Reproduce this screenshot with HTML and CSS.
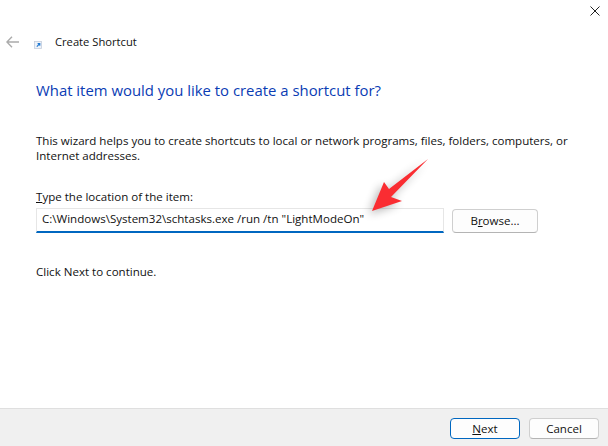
FILE: index.html
```html
<!DOCTYPE html>
<html lang="en">
<head>
<meta charset="utf-8">
<title>Create Shortcut</title>
<link rel="stylesheet" href="styles.css">
</head>
<body>
<div class="window">
  <div class="closebar">
    <svg class="close" width="10" height="10" viewBox="0 0 10 10" aria-hidden="true"><path d="M.5.5l9 9M9.5.5l-9 9" stroke="#222" stroke-width="1" fill="none"/></svg>
  </div>
  <header class="titlebar">
    <svg class="back" width="13" height="12" viewBox="0 0 13 12" aria-hidden="true"><path d="M6 .7L.9 6 6 11.3M1 6h12" stroke="#ababab" stroke-width="1.4" fill="none"/></svg>
    <svg class="appicon" width="8" height="8" viewBox="0 0 8 8" aria-hidden="true"><rect x=".5" y=".5" width="7" height="7" fill="#eef2f8" stroke="#c4cedc" stroke-width=".8"/><path d="M2.8 5.6L5.6 2.8M3.6 2.6h2.2v2.2" stroke="#1f78d1" stroke-width="1.1" fill="none"/></svg>
    <span class="title">Create Shortcut</span>
  </header>
  <main class="content">
    <h1 class="heading">What item would you like to create a shortcut for?</h1>
    <p class="intro">This wizard helps you to create shortcuts to local or network programs, files, folders, computers, or Internet addresses.</p>
    <label class="label" for="loc"><u>T</u>ype the location of the item:</label>
    <div class="field-row">
      <div class="field" id="loc">C:\Windows\System32\schtasks.exe /run /tn "LightModeOn"</div>
      <button class="btn browse" type="button">B<u>r</u>owse...</button>
    </div>
    <p class="hint">Click Next to continue.</p>
  </main>
  <footer class="footer">
    <button class="btn primary" type="button"><u>N</u>ext</button>
    <button class="btn" type="button">Cancel</button>
  </footer>
  <svg class="annotation" width="80" height="70" viewBox="360 150 80 70" aria-hidden="true">
    <defs><filter id="shadow" x="-50%" y="-50%" width="200%" height="200%"><feGaussianBlur stdDeviation="5"/></filter></defs>
    <path d="M428 159L389 189 384 182 372 211 402 201 391 197Z" fill="#000" opacity=".3" filter="url(#shadow)" transform="translate(-3 3)"/>
    <path d="M428 159L389 189 384 182 372 211 402 201 391 197Z" fill="#fa2d32"/>
  </svg>
</div>
</body>
</html>
```
FILE: styles.css
```css
* { box-sizing: border-box; }
html, body { margin: 0; padding: 0; }
body {
  width: 608px;
  height: 446px;
  overflow: hidden;
  background: #fff;
  font-family: "Open Sans", "Noto Sans", "Liberation Sans", sans-serif;
  font-size: 11.55px;
  color: #111;
}
.window {
  position: relative;
  width: 608px;
  height: 446px;
  display: flex;
  flex-direction: column;
}
.closebar {
  height: 31px;
  padding: 6px 8px 0 0;
  display: flex;
  justify-content: flex-end;
}
.titlebar {
  height: 21px;
  display: flex;
  align-items: center;
  padding-left: 6px;
}
.back { flex: none; }
.appicon { flex: none; margin: 6px 0 0 15px; }
.title { margin-left: 13px; font-size: 11.2px; color: #111; }
.content {
  flex: 1;
  padding: 0 0 0 36px;
}
.heading {
  margin: 28px 0 0;
  font-size: 14.9px;
  line-height: 20px;
  font-weight: 400;
  color: #0a3cb4;
}
.intro {
  margin: 33px 0 0;
  width: 545px;
  line-height: 15px;
}
.label {
  display: block;
  margin-top: 26px;
  line-height: 15px;
}
.field-row {
  display: flex;
  align-items: flex-start;
  gap: 8px;
  margin-top: 4px;
}
.field {
  width: 408px;
  height: 25px;
  padding: 0 0 0 5px;
  border: 1px solid #e6e6e6;
  border-bottom: 2px solid #0067c0;
  line-height: 19px;
  white-space: nowrap;
}
.btn {
  width: 70px;
  height: 21px;
  padding: 0;
  border: 1px solid #cfcfcf;
  border-bottom-color: #b4b4b4;
  border-radius: 4px;
  background: #fdfdfd;
  font: inherit;
  color: #111;
}
.browse { width: 86px; height: 24px; margin-top: 1px; padding-bottom: 2px; }
.hint { margin: 31px 0 0; line-height: 15px; }
.footer {
  height: 38px;
  background: #f0f0f0;
  border-top: 1px solid #dfdfdf;
  display: flex;
  justify-content: flex-end;
  gap: 9px;
  padding: 9px 9px 0 0;
}
.primary { border: 1px solid #0067c0; }
.annotation {
  position: absolute;
  left: 360px;
  top: 150px;
  overflow: visible;
}
```
